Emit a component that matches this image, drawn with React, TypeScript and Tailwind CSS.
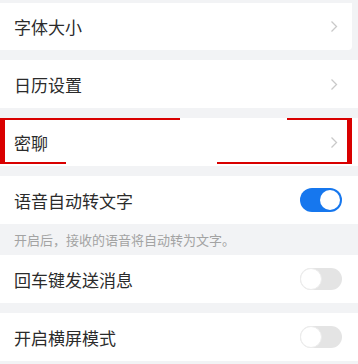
import React from "react";

const font = { fontFamily: '"Noto Sans CJK SC", "Noto Sans", sans-serif' };

function Chevron() {
  return (
    <svg width="8" height="13" viewBox="0 0 8 13" className="shrink-0">
      <polyline points="1.5,1.5 6.5,6.5 1.5,11.5" fill="none" stroke="#c9c9c9" strokeWidth="1.3" />
    </svg>
  );
}

function Toggle({ on }: { on: boolean }) {
  return on ? (
    <div className="w-[42px] h-[24px] rounded-full bg-[#1677ee] flex items-center justify-end px-[2px]">
      <div className="w-[20px] h-[20px] rounded-full bg-white" />
    </div>
  ) : (
    <div className="w-[42px] h-[22px] rounded-full bg-[#e4e4e4] flex items-center justify-start">
      <div className="w-[22px] h-[22px] rounded-full bg-white border border-[#ececec]" />
    </div>
  );
}

function Row({ label, right, h = "h-[48px]", extra = "" }: { label: string; right: React.ReactNode; h?: string; extra?: string }) {
  return (
    <div className={`${h} bg-white flex items-center justify-between pl-[14px] pr-[20px] ${extra}`}>
      <span className="text-[17px] text-[#2b2b2b] leading-none">{label}</span>
      {right}
    </div>
  );
}

export default function App() {
  return (
    <div className="w-[358px] h-[364px] bg-[#f2f3f5] overflow-hidden flex flex-col" style={font}>
      <div className="h-[3px]" />
      <Row label="字体大小" right={<Chevron />} h="h-[47px]" extra="mr-[6px] rounded-br-[4px] !pr-[14px]" />
      <div className="h-[10px]" />
      <Row label="日历设置" right={<Chevron />} />
      <div className="h-[10px]" />
      <div className="relative">
        <Row label="密聊" right={<Chevron />} />
        <div className="absolute left-[0px] top-[0px] w-[5px] h-[46px] bg-[#d90000]" />
        <div className="absolute left-[347px] top-[0px] w-[5px] h-[46px] bg-[#d90000]" />
        <div className="absolute left-[0px] top-[0px] w-[180px] h-[2px] bg-[#d90000]" />
        <div className="absolute left-[287px] top-[0px] w-[65px] h-[2px] bg-[#d90000]" />
        <div className="absolute left-[0px] top-[44px] w-[66px] h-[2px] bg-[#d90000]" />
        <div className="absolute left-[217px] top-[44px] w-[135px] h-[2px] bg-[#d90000]" />
      </div>
      <div className="h-[10px]" />
      <Row label="语音自动转文字" right={<Toggle on />} extra="!pr-[16px]" />
      <div className="h-[31px] flex items-center pl-[14px]">
        <span className="text-[13px] text-[#a3a3a3] leading-none">开启后，接收的语音将自动转为文字。</span>
      </div>
      <Row label="回车键发送消息" right={<Toggle on={false} />} extra="!pr-[16px]" />
      <div className="h-[10px]" />
      <Row label="开启横屏模式" right={<Toggle on={false} />} extra="!pr-[16px]" />
    </div>
  );
}
